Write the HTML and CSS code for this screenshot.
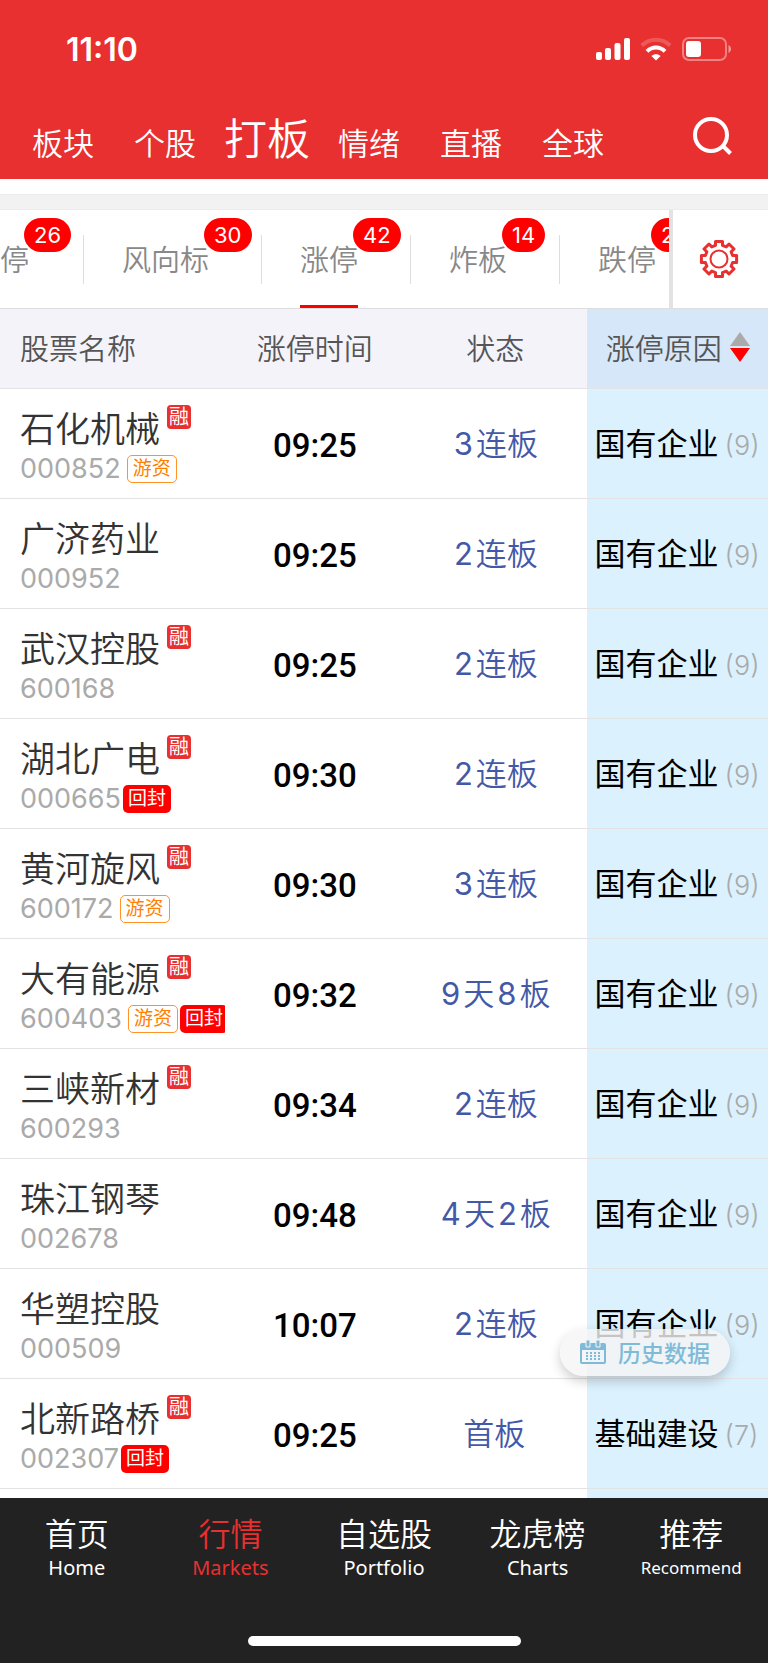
FILE: index.html
```
<!DOCTYPE html>
<html lang="zh-CN">
<head>
  <meta charset="UTF-8" />
  <meta name="viewport" content="width=device-width, initial-scale=1.0"/>
  <title>打板 - 涨停</title>
  <link rel="stylesheet" href="styles.css">
</head>
<body>

  <header>
    <div class="status-bar">
      <span class="clock">11:10</span>
      <svg class="signal" width="34" height="24" viewBox="0 0 34 24" fill="#fff">
        <rect x="0" y="15" width="6" height="8" rx="2"/>
        <rect x="9" y="11" width="6" height="12" rx="2"/>
        <rect x="18.500" y="6" width="6" height="17" rx="2"/>
        <rect x="28" y="1" width="6" height="22" rx="2"/>
      </svg>
      <svg class="wifi" width="32" height="24" viewBox="0 0 32 24" fill="none" stroke="#fff" stroke-width="4">
        <path d="M1.800 8.500C10 .8 22 .8 30.200 8.500" opacity=".2"/>
        <path d="M7 14.300c5-5.200 13-5.200 18 0"/>
        <path d="M16 23.500l-4.600-4.500c2.600-2.300 6.600-2.300 9.200 0z" fill="#fff" stroke="none"/>
      </svg>
      <svg class="battery" width="50" height="24" viewBox="0 0 50 24">
        <rect x="1" y="1" width="43" height="22" rx="6" fill="none" stroke="#fff" stroke-width="2" opacity=".4"/>
        <rect x="4" y="4" width="15" height="16" rx="3" fill="#fff"/>
        <path d="M46.500 8c3.300 1.500 3.300 6.500 0 8z" fill="#fff" opacity=".5"/>
      </svg>
    </div>

    <nav class="top-nav">
      <a href="#">板块</a>
      <a href="#">个股</a>
      <a href="#" class="active">打板</a>
      <a href="#">情绪</a>
      <a href="#">直播</a>
      <a href="#">全球</a>
      <button type="button" class="search-btn" aria-label="搜索">
        <svg width="40" height="40" viewBox="0 0 40 40" fill="none" stroke="#fff">
          <circle cx="19" cy="19" r="16" stroke-width="4"/>
          <path d="M30 29l8.500 8.500" stroke-width="4"/>
        </svg>
      </button>
    </nav>
  </header>

  <div class="divider"></div>

  <div class="tab-bar">
    <nav class="tabs">
      <a href="#" class="first"><span>停<i>26</i></span></a>
      <a href="#"><span>风向标<i>30</i></span></a>
      <a href="#" class="active"><span>涨停<i>42</i></span></a>
      <a href="#"><span>炸板<i>14</i></span></a>
      <a href="#"><span>跌停<i>2</i></span></a>
    </nav>
    <button type="button" class="settings-btn" aria-label="设置">
      <svg width="40" height="40" viewBox="-20 -20 40 40" fill="none" stroke="#e83030">
        <path stroke-width="3" stroke-linejoin="round" d="M-3.500-17.600h7V-13.600L7.200-12.100 10-15 15-10 12.100-7.200 13.600-3.500H17.600v7H13.600L12.100 7.200 15 10 10 15 7.200 12.100 3.500 13.600V17.600h-7V13.600L-7.200 12.100-10 15-15 10-12.100 7.200-13.600 3.500H-17.600v-7H-13.600L-12.100-7.200-15-10-10-15-7.200-12.100-3.500-13.600z"/>
        <circle r="8.500" stroke-width="2"/>
      </svg>
    </button>
  </div>

  <main>
    <table class="stock-table">
      <colgroup>
        <col class="col-name">
        <col class="col-time">
        <col class="col-state">
        <col class="col-reason">
      </colgroup>
      <thead>
        <tr>
          <th class="name">股票名称</th>
          <th>涨停时间</th>
          <th>状态</th>
          <th class="reason">
            <div class="sort">涨停原因
              <svg width="20" height="30" viewBox="0 0 20 30">
                <path d="M10 0l10 14H0z" fill="#aaa"/>
                <path d="M0 16h20L10 30z" fill="#f00"/>
              </svg>
            </div>
          </th>
        </tr>
      </thead>
      <tbody>
        <tr>
          <td class="name">
            <div class="title">石化机械<span class="rong">融</span></div>
            <div class="code">000852<span class="tag youzi">游资</span></div>
          </td>
          <td class="time">09:25</td>
          <td class="state"><b>3</b>连板</td>
          <td class="reason">国有企业<span>(9)</span></td>
        </tr>
        <tr>
          <td class="name">
            <div class="title">广济药业</div>
            <div class="code">000952</div>
          </td>
          <td class="time">09:25</td>
          <td class="state"><b>2</b>连板</td>
          <td class="reason">国有企业<span>(9)</span></td>
        </tr>
        <tr>
          <td class="name">
            <div class="title">武汉控股<span class="rong">融</span></div>
            <div class="code">600168</div>
          </td>
          <td class="time">09:25</td>
          <td class="state"><b>2</b>连板</td>
          <td class="reason">国有企业<span>(9)</span></td>
        </tr>
        <tr>
          <td class="name">
            <div class="title">湖北广电<span class="rong">融</span></div>
            <div class="code">000665<span class="tag huifeng">回封</span></div>
          </td>
          <td class="time">09:30</td>
          <td class="state"><b>2</b>连板</td>
          <td class="reason">国有企业<span>(9)</span></td>
        </tr>
        <tr>
          <td class="name">
            <div class="title">黄河旋风<span class="rong">融</span></div>
            <div class="code">600172<span class="tag youzi">游资</span></div>
          </td>
          <td class="time">09:30</td>
          <td class="state"><b>3</b>连板</td>
          <td class="reason">国有企业<span>(9)</span></td>
        </tr>
        <tr>
          <td class="name">
            <div class="title">大有能源<span class="rong">融</span></div>
            <div class="code">600403<span class="tag youzi">游资</span><span class="tag huifeng">回封</span></div>
          </td>
          <td class="time">09:32</td>
          <td class="state"><b>9</b>天<b>8</b>板</td>
          <td class="reason">国有企业<span>(9)</span></td>
        </tr>
        <tr>
          <td class="name">
            <div class="title">三峡新材<span class="rong">融</span></div>
            <div class="code">600293</div>
          </td>
          <td class="time">09:34</td>
          <td class="state"><b>2</b>连板</td>
          <td class="reason">国有企业<span>(9)</span></td>
        </tr>
        <tr>
          <td class="name">
            <div class="title">珠江钢琴</div>
            <div class="code">002678</div>
          </td>
          <td class="time">09:48</td>
          <td class="state"><b>4</b>天<b>2</b>板</td>
          <td class="reason">国有企业<span>(9)</span></td>
        </tr>
        <tr>
          <td class="name">
            <div class="title">华塑控股</div>
            <div class="code">000509</div>
          </td>
          <td class="time">10:07</td>
          <td class="state"><b>2</b>连板</td>
          <td class="reason">国有企业<span>(9)</span></td>
        </tr>
        <tr>
          <td class="name">
            <div class="title">北新路桥<span class="rong">融</span></div>
            <div class="code">002307<span class="tag huifeng">回封</span></div>
          </td>
          <td class="time">09:25</td>
          <td class="state">首板</td>
          <td class="reason">基础建设<span>(7)</span></td>
        </tr>
        <tr class="next">
          <td colspan="3"></td>
          <td class="reason"></td>
        </tr>
      </tbody>
    </table>

    <button type="button" class="history-btn">
      <svg width="26" height="24" viewBox="0 0 26 24" fill="#7fbbd9">
        <path fill-rule="evenodd" d="M2 3h22q2 0 2 2v17q0 2-2 2H2q-2 0-2-2V5q0-2 2-2zM2 10v12h22V10z"/>
        <path d="M6 0h4v7H6zM16 0h4v7h-4z" stroke="#f2f5f7"/>
        <path d="M6 12h2v2H6zM10 12h2v2h-2zM14 12h2v2h-2zM18 12h2v2h-2zM6 15h2v2H6zM10 15h2v2h-2zM14 15h2v2h-2zM18 15h2v2h-2zM6 18h2v2H6zM10 18h2v2h-2zM14 18h2v2h-2zM18 18h2v2h-2z"/>
      </svg>
      历史数据
    </button>
  </main>

  <footer>
    <nav class="bottom-nav">
      <a href="#">首页<small>Home</small></a>
      <a href="#" class="active">行情<small>Markets</small></a>
      <a href="#">自选股<small>Portfolio</small></a>
      <a href="#">龙虎榜<small>Charts</small></a>
      <a href="#">推荐<small class="long">Recommend</small></a>
    </nav>
    <div class="home-indicator"></div>
  </footer>

</body>
</html>
```
FILE: styles.css
```
* {
  box-sizing: border-box;
}

body {
  margin: 0;
  font-family: Inter, 'Noto Sans CJK SC', sans-serif;
  font-weight: 350;
  background-color: #fff;
  color: #333;
}

a {
  color: inherit;
  text-decoration: none;
}

button {
  border: none;
  padding: 0;
  background: none;
  font: inherit;
  cursor: pointer;
}

svg {
  display: block;
}

/* header */
header {
  background-color: #e83030;
  color: #fff;
  height: 179px;
}

.status-bar {
  display: flex;
  align-items: center;
  height: 98px;
  padding: 0 36px 0 66px;
}

.clock {
  font-size: 32px;
  font-weight: 600;
  margin-right: auto;
}

.wifi {
  margin: 0 10px;
}

.top-nav {
  display: flex;
  align-items: baseline;
  padding: 11px 12px 0;
}

.top-nav a {
  width: 102px;
  text-align: center;
  font-size: 31px;
  line-height: 60px;
}

.top-nav a.active {
  font-size: 43px;
}

.search-btn {
  margin: 7px 24px 0 auto;
  align-self: flex-start;
}

.divider {
  height: 31px;
  border-top: 15px solid #fff;
  background-color: #f2f2f2;
  box-shadow: inset 0 1px #ebebef, inset 0 -1px #ebebef;
}

/* tabs */
.tab-bar {
  display: flex;
  height: 99px;
  border-bottom: 1px solid #ddd;
}

.tabs {
  flex: 1;
  display: flex;
  overflow: hidden;
  border-right: 4px solid #e3e3e3;
}

.tabs a {
  flex: none;
  position: relative;
  padding: 25px 53px 0 38px;
  font-size: 29px;
  line-height: 52px;
  color: #888;
}

.tabs a.first {
  padding-left: 0;
  padding-right: 55px;
}

.tabs a::after {
  content: '';
  position: absolute;
  right: 0;
  top: 25px;
  width: 1px;
  height: 49px;
  background-color: #ddd;
}

.tabs span {
  display: block;
  position: relative;
  height: 73px;
}

.tabs .active span {
  border-bottom: 3px solid #f00;
}

.tabs i {
  position: absolute;
  left: 100%;
  top: -17px;
  margin-left: -5px;
  padding: 0 10px;
  border-radius: 17px;
  background-color: #f00;
  color: #fff;
  font-size: 22px;
  font-style: normal;
  font-weight: 400;
  line-height: 34px;
}

.settings-btn {
  width: 95px;
  padding-left: 26px;
}

/* table */
main {
  position: relative;
}

.stock-table {
  width: 100%;
  table-layout: fixed;
  border-spacing: 0;
}

.col-name {
  width: 29.5%;
}

.col-time {
  width: 23%;
}

.col-state {
  width: 24%;
}

.col-reason {
  width: 23.5%;
}

th,
td {
  padding: 0;
  border-bottom: 1px solid #e3e3e3;
  text-align: center;
  white-space: nowrap;
}

th {
  height: 80px;
  padding-bottom: 3px;
  background-color: #f4f3fa;
  color: #555;
  font-size: 29px;
  font-weight: 350;
}

th.reason {
  background-color: #d5e7f8;
}

.sort {
  display: flex;
  align-items: center;
  justify-content: center;
  gap: 8px;
}

td {
  height: 110px;
}

th.name,
td.name {
  padding-left: 20px;
  padding-right: 2px;
  text-align: left;
}

td.name {
  padding-top: 3px;
}

.title {
  display: flex;
  font-size: 35px;
  line-height: 48px;
}

.rong {
  width: 24px;
  height: 24px;
  margin-left: 7px;
  border-radius: 4px;
  background-color: #e83030;
  color: #fff;
  font-size: 20px;
  font-weight: 400;
  line-height: 24px;
  text-align: center;
}

.code {
  display: flex;
  align-items: center;
  overflow: hidden;
  font-size: 27px;
  font-weight: 400;
  line-height: 32px;
  color: #aaa;
}

.tag {
  flex: none;
  height: 28px;
  padding: 0 5px;
  border-radius: 5px;
  font-size: 19px;
  line-height: 28px;
}

.youzi {
  margin-left: 6px;
  border: 1px solid #ff9326;
  color: #ff8000;
  line-height: 26px;
}

.huifeng {
  margin-left: 2px;
  background-color: #f00;
  color: #fff;
}

td.time {
  padding-top: 3px;
  font-family: Roboto, sans-serif;
  font-size: 33px;
  font-weight: 500;
  color: #000;
}

.state {
  padding-right: 2px;
  padding-bottom: 4px;
  font-size: 31px;
  color: #4359a8;
}

.state b {
  margin: 0 3px;
  font-weight: 400;
}

td.reason {
  padding: 0 0 4px 7px;
  background-color: #dbf1fe;
  text-align: left;
  font-size: 31px;
  font-weight: 400;
  color: #000;
}

.reason span {
  margin-left: 6px;
  font-size: 27px;
  font-weight: 300;
  color: #aaa;
}

.next td {
  height: 9px;
  padding: 0;
  border-bottom: none;
  font-size: 0;
}

.history-btn {
  position: absolute;
  right: 38px;
  bottom: 122px;
  display: flex;
  align-items: center;
  gap: 12px;
  height: 47px;
  padding: 0 20px 2px;
  border-radius: 24px;
  background-color: rgba(245, 245, 245, 0.8);
  box-shadow: 0 5px 12px rgba(0, 0, 0, 0.2);
  color: #7fbbd9;
  font-size: 23px;
  font-weight: 500;
}

/* bottom navigation */
footer {
  background-color: #222;
  color: #fff;
  padding: 16px 0 17px;
}

.bottom-nav {
  display: flex;
}

.bottom-nav a {
  flex: 1;
  height: 122px;
  text-align: center;
  font-size: 32px;
  line-height: 42px;
}

.bottom-nav .active {
  color: #e83030;
}

.bottom-nav small {
  display: block;
  font-family: 'Noto Sans', sans-serif;
  font-size: 20px;
  font-weight: 400;
  line-height: 24px;
}

.bottom-nav .long {
  font-size: 17px;
}

.home-indicator {
  width: 273px;
  height: 10px;
  margin: 0 auto;
  border-radius: 5px;
  background-color: #fff;
}
```
